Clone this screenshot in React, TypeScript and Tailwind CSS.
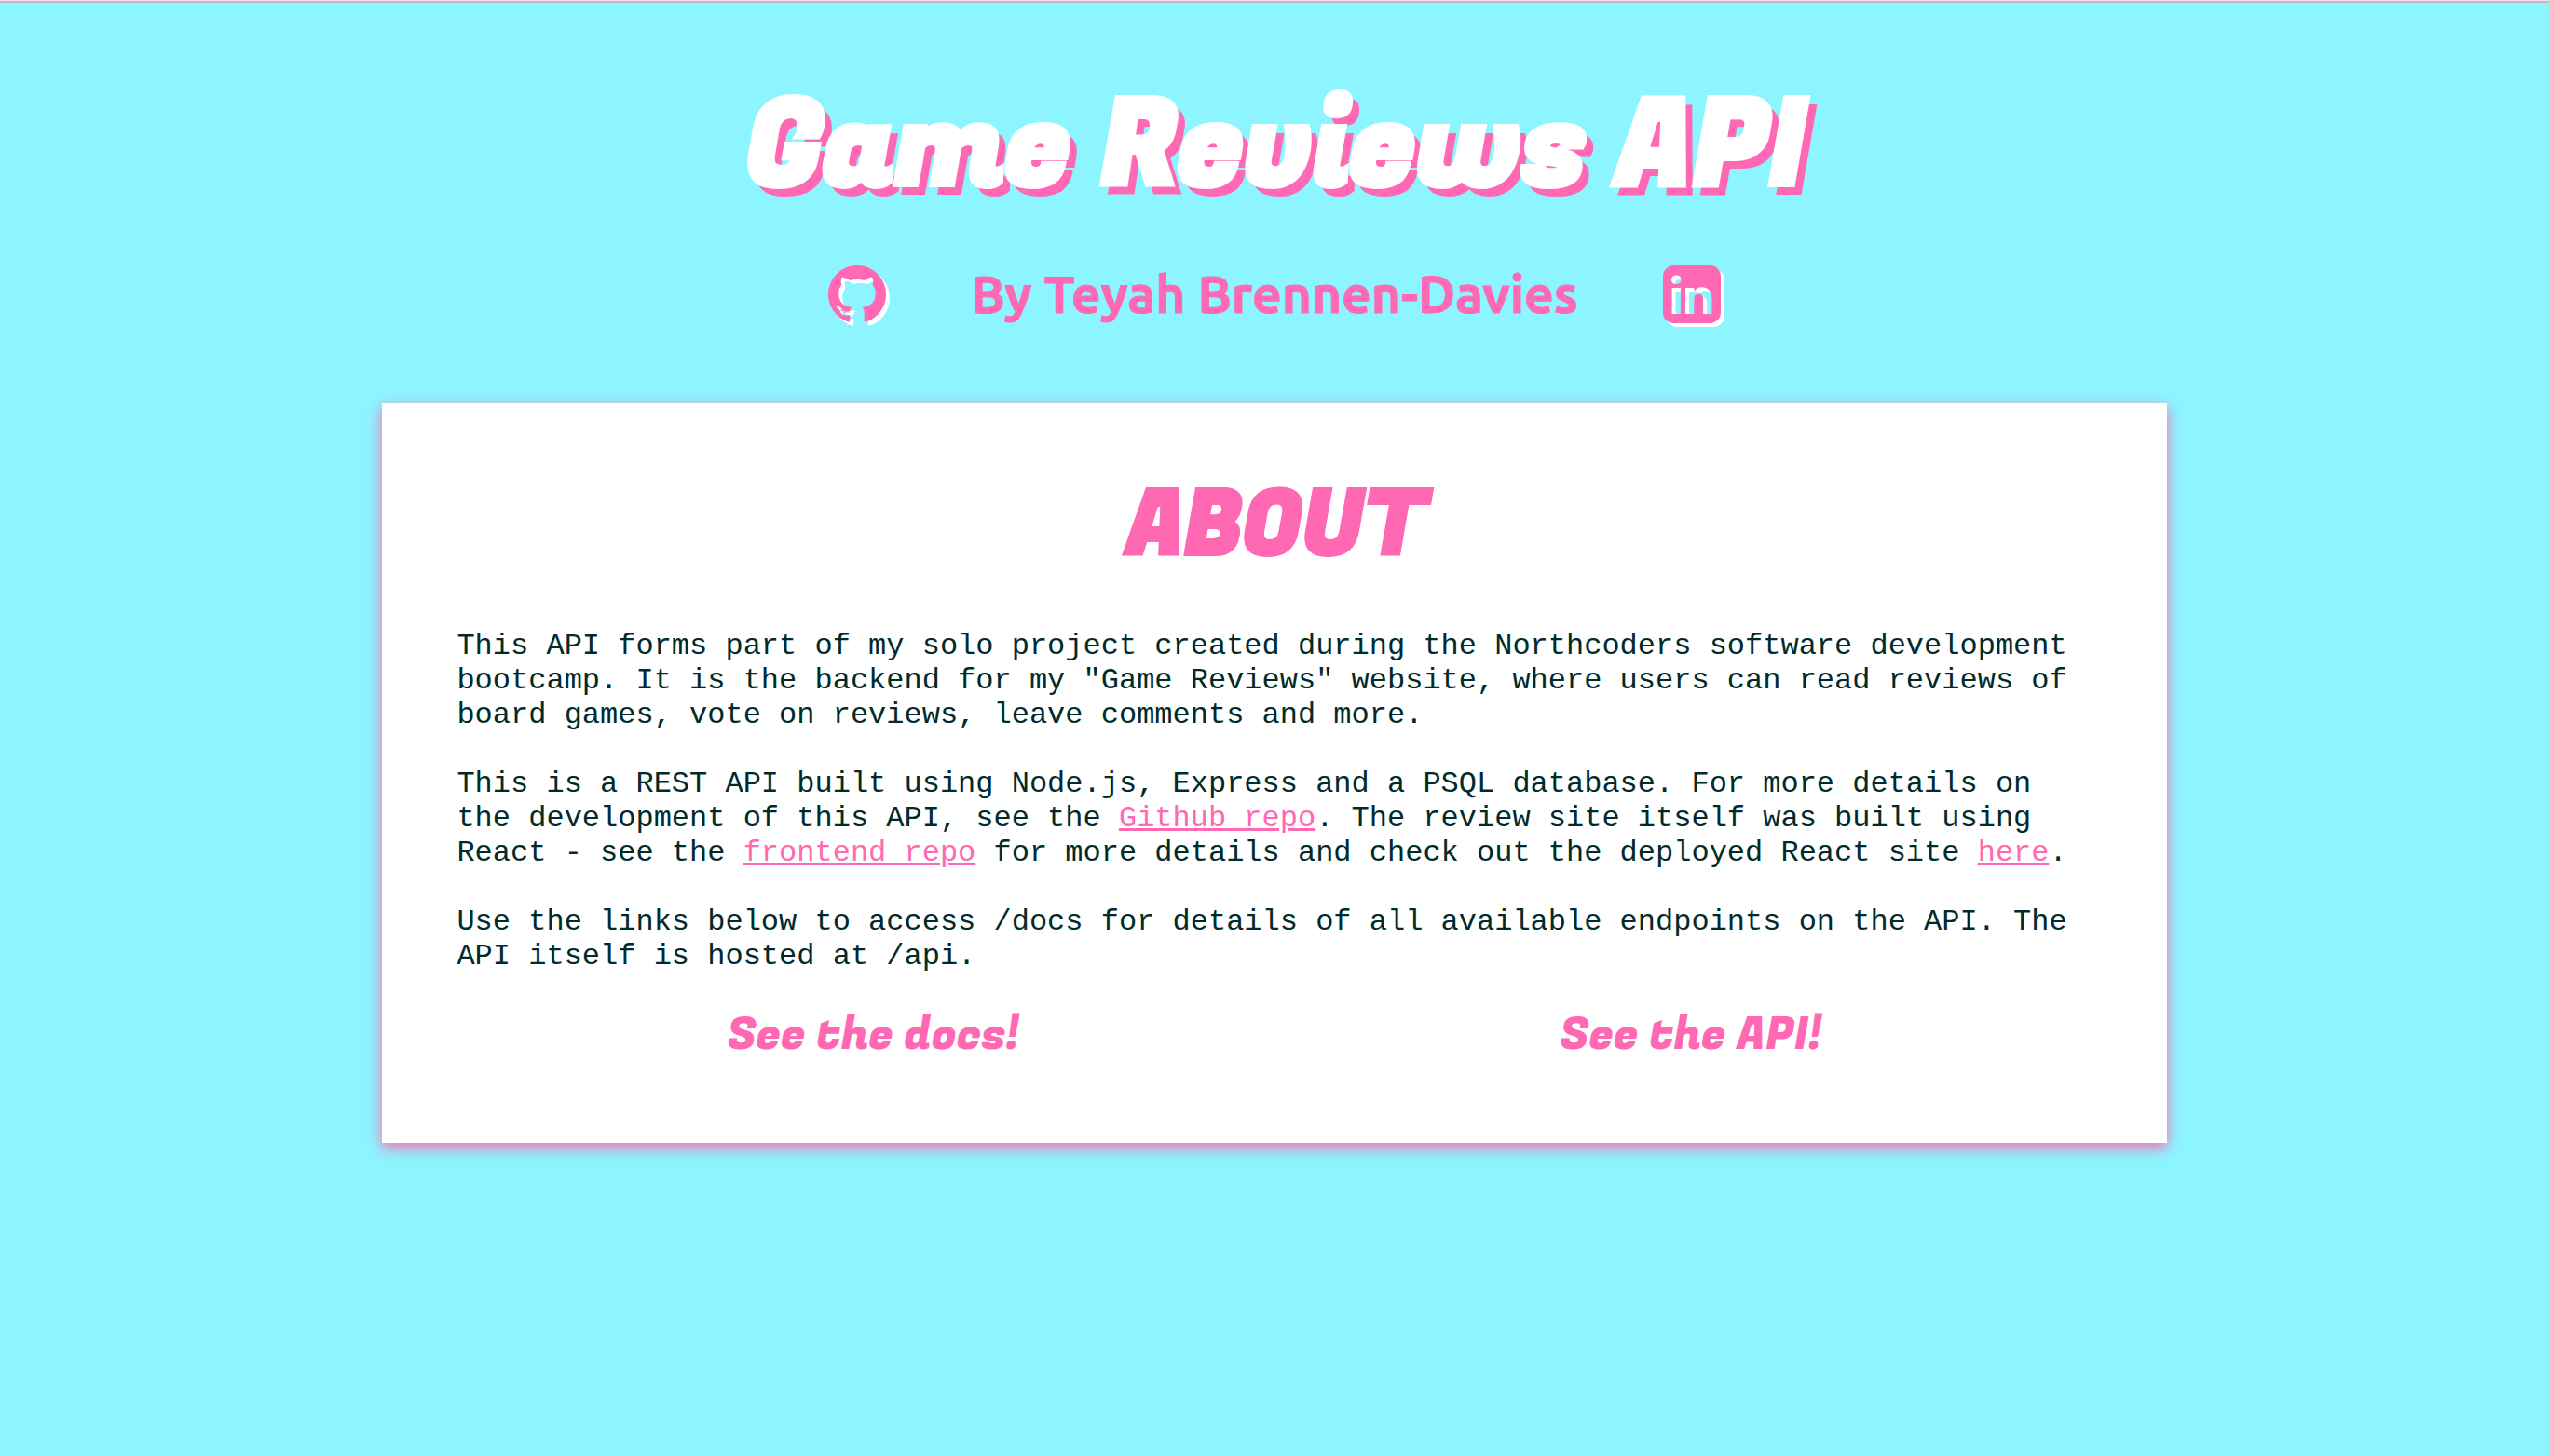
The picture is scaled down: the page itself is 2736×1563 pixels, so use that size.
const githubPath =
  'M896 128q209 0 385.5 103t279.5 279.5 103 385.5q0 251-146.5 451.5t-378.5 277.5q-27 5-40-7t-13-30q0-3 .5-76.5t.5-134.5q0-97-52-142 57-6 102.5-18t94-39 81-66.5 53-105 20.5-150.5q0-119-79-206 37-91-8-204-28-9-81 11t-92 44l-38 24q-93-26-192-26t-192 26q-16-11-42.5-27t-83.5-38.5-85-13.5q-45 113-8 204-79 87-79 206 0 85 20.5 150t52.5 105 80.5 67 94 39 102.5 18q-39 36-49 103-21 10-45 15t-57 5-65.5-21.5-55.5-62.5q-19-32-48.5-52t-49.5-24l-20-3q-21 0-29 4.5t-5 11.5 9 14 13 12l7 5q22 10 43.5 38t31.5 51l10 23q13 38 44 61.5t67 30 69.5 7 55.5-3.5l23-4q0 38 .5 88.5t.5 54.5q0 18-13 30t-40 7q-232-77-378.5-277.5t-146.5-451.5q0-209 103-385.5t279.5-279.5 385.5-103zm-477 1103q3-7-7-12-10-3-13 2-3 7 7 12 9 6 13-2zm31 34q7-5-2-16-10-9-16-3-7 5 2 16 10 10 16 3zm30 45q9-7 0-19-8-13-17-6-9 5 0 18t17 7zm42 42q8-8-4-19-12-12-20-3-9 8 4 19 12 12 20 3zm57 25q3-11-13-16-15-4-19 7t13 15q15 6 19-6zm63 5q0-13-17-11-16 0-16 11 0 13 17 11 16 0 16-11zm58-10q-2-11-18-9-16 3-14 15t18 8 14-14z';

const linkedinPath =
  'M365 1414h231v-694h-231v694zm246-908q-1-52-36-86t-93-34-94.5 34-36.5 86q0 51 35.5 85.5t92.5 34.5h1q59 0 95-34.5t36-85.5zm585 908h231v-398q0-154-73-233t-193-79q-136 0-209 117h2v-101h-231q3 66 0 694h231v-388q0-38 7-56 15-35 45-59.5t74-24.5q116 0 116 157v371zm468-998v960q0 119-84.5 203.5t-203.5 84.5h-960q-119 0-203.5-84.5t-84.5-203.5v-960q0-119 84.5-203.5t203.5-84.5h960q119 0 203.5 84.5t84.5 203.5z';

function SocialLink({ label, path }: { label: string; path: string }) {
  return (
    <a href="#" aria-label={label}>
      <svg
        viewBox="128 128 1536 1536"
        className="size-[62px] overflow-visible fill-[#ff69b4] drop-shadow-[4px_4px_0_#fff]"
        aria-hidden="true"
      >
        <path d={path} />
      </svg>
    </a>
  );
}

function TextLink({ children }: { children: string }) {
  return (
    <a href="#" className="text-[#ff69b4] underline">
      {children}
    </a>
  );
}

function DisplayLink({ children }: { children: string }) {
  return (
    <a href="#" className="font-['Fugaz_One','Roboto',sans-serif] text-5xl leading-[72px] text-[#ff69b4]">
      {children}
    </a>
  );
}

export default function App() {
  return (
    <div className="min-h-screen border-t border-[#fbdce8] bg-[#8cf5ff] text-[#002b2b] shadow-[inset_0_2px_0_#b4bcc4]">
      <header className="flex flex-col items-center pt-[61px] text-[#ff69b4]">
        <h1 className="pl-1 font-['Fugaz_One','Roboto',sans-serif] text-[128px] leading-[192px] font-bold text-white [-webkit-text-stroke:2px_#fff] [text-shadow:8px_9px_0_#ff69b4]">
          Game Reviews API
        </h1>
        <div className="mt-[30px] flex items-center gap-[91px]">
          <SocialLink label="GitHub" path={githubPath} />
          <h2 className="font-['Ubuntu','Noto_Sans',sans-serif] text-[55px] leading-[64px] font-bold [-webkit-text-stroke:1px_#ff69b4]">
            By Teyah Brennen-Davies
          </h2>
          <SocialLink label="LinkedIn" path={linkedinPath} />
        </div>
      </header>

      <main className="mx-auto mt-[85px] w-[70%] bg-white p-20 shadow-[0_5px_15px_#ff69b4]">
        <h2 className="pl-1 text-center font-['Fugaz_One','Roboto',sans-serif] text-8xl leading-[106px] font-bold text-[#ff69b4] [-webkit-text-stroke:1px_#ff69b4]">
          ABOUT
        </h2>
        <div className="mt-14 space-y-[37px] font-['Liberation_Mono',monospace] text-[32px] leading-[37px]">
          <p>
            This API forms part of my solo project created during the Northcoders software development bootcamp. It is
            the backend for my "Game Reviews" website, where users can read reviews of board games, vote on reviews,
            leave comments and more.
          </p>
          <p>
            This is a REST API built using Node.js, Express and a PSQL database. For more details on the development of
            this API, see the <TextLink>Github repo</TextLink>. The review site itself was built using React - see the{' '}
            <TextLink>frontend repo</TextLink> for more details and check out the deployed React site{' '}
            <TextLink>here</TextLink>.
          </p>
          <p>
            Use the links below to access /docs for details of all available endpoints on the API. The API itself is
            hosted at /api.
          </p>
        </div>
        <nav className="mt-[30px] flex justify-around">
          <DisplayLink>See the docs!</DisplayLink>
          <DisplayLink>See the API!</DisplayLink>
        </nav>
      </main>
    </div>
  );
}
